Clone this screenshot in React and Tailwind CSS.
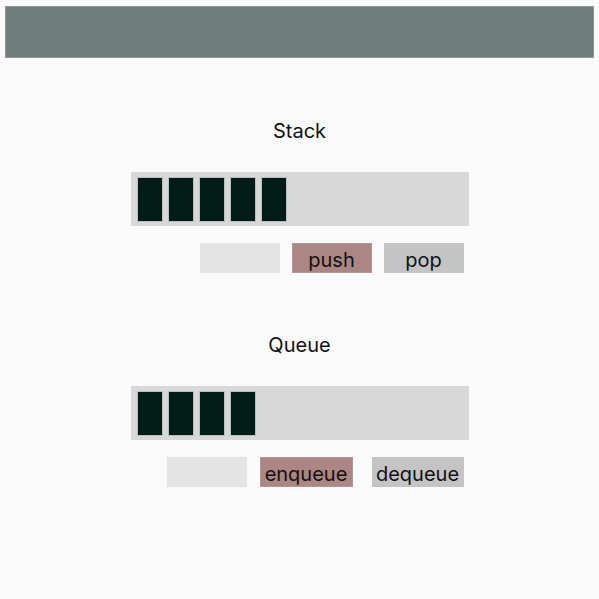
const Block = () => (
  <div className="w-[26px] h-[45px] bg-[#021c18] border border-[#b8bfbd] box-border shrink-0" />
);

const Section = ({ title, count, children }) => (
  <div className="flex flex-col items-center">
    <h2 className="text-xl leading-7 text-[#111]">{title}</h2>
    <div className="mt-[27px] w-[338px] h-[54px] bg-[#d8d8d8] flex items-center gap-[5px] px-[6px]">
      {Array.from({ length: count }).map((_, i) => (
        <Block key={i} />
      ))}
    </div>
    <div className="mt-[17px] w-[338px] pr-[5px] flex justify-end items-center">{children}</div>
  </div>
);

export default function App() {
  return (
    <div
      className="min-h-screen bg-[#fafafa] pt-[6px]"
      style={{ fontFamily: "Inter, 'Noto Sans', sans-serif" }}
    >
      <div className="mx-[5px] h-[52px] bg-[#6f7e7b] border border-[#8d9a97]" />

      <div className="mt-[59px] flex flex-col gap-[58px]">
        <Section title="Stack" count={5}>
          <input className="w-[80px] h-[30px] bg-[#e4e4e4] outline-none" />
          <button className="ml-[12px] w-[80px] h-[30px] pt-[4px] bg-[#ac8585] border border-[#b89595] text-xl text-[#111] leading-none">
            push
          </button>
          <button className="ml-[12px] w-[80px] h-[30px] pt-[4px] bg-[#c4c4c4] text-xl text-[#111] leading-none">
            pop
          </button>
        </Section>

        <Section title="Queue" count={4}>
          <input className="w-[80px] h-[30px] bg-[#e4e4e4] outline-none" />
          <button className="ml-[13px] w-[93px] h-[30px] pt-[4px] bg-[#ac8585] border border-[#b89595] text-xl text-[#111] leading-none">
            enqueue
          </button>
          <button className="ml-[19px] w-[92px] h-[30px] pt-[4px] bg-[#c4c4c4] text-xl text-[#111] leading-none">
            dequeue
          </button>
        </Section>
      </div>
    </div>
  );
}
